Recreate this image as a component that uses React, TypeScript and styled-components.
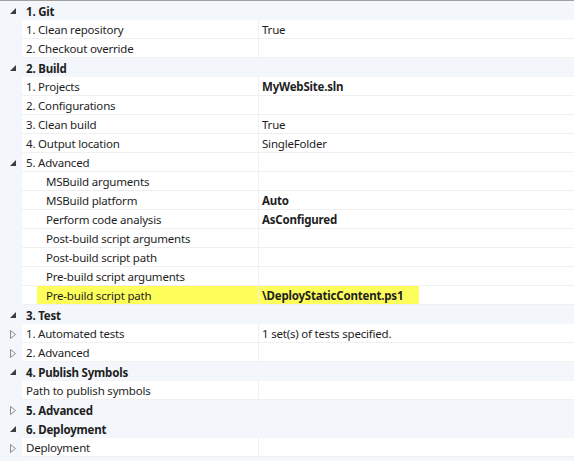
import styled, { createGlobalStyle } from "styled-components"

const GlobalStyle = createGlobalStyle`
  html, body { margin: 0; padding: 0; background: #ffffff; }
  body {
    font-family: "Segoe UI", "Noto Sans", "Open Sans", sans-serif;
    font-size: 11.5px;
    letter-spacing: -0.2px;
    color: #1e1e1e;
  }
`

type Expander = "none" | "open" | "closed"

type Item =
  | { kind: "cat"; label: string; expander?: Expander }
  | { kind: "prop"; label: string; value?: string; bold?: boolean; indent?: number; expander?: Expander; highlight?: boolean }

const items: Item[] = [
  { kind: "cat", label: "1. Git", expander: "open" },
  { kind: "prop", label: "1. Clean repository", value: "True" },
  { kind: "prop", label: "2. Checkout override" },
  { kind: "cat", label: "2. Build", expander: "open" },
  { kind: "prop", label: "1. Projects", value: "MyWebSite.sln", bold: true },
  { kind: "prop", label: "2. Configurations" },
  { kind: "prop", label: "3. Clean build", value: "True" },
  { kind: "prop", label: "4. Output location", value: "SingleFolder" },
  { kind: "prop", label: "5. Advanced", expander: "open" },
  { kind: "prop", label: "MSBuild arguments", indent: 1 },
  { kind: "prop", label: "MSBuild platform", value: "Auto", bold: true, indent: 1 },
  { kind: "prop", label: "Perform code analysis", value: "AsConfigured", bold: true, indent: 1 },
  { kind: "prop", label: "Post-build script arguments", indent: 1 },
  { kind: "prop", label: "Post-build script path", indent: 1 },
  { kind: "prop", label: "Pre-build script arguments", indent: 1 },
  { kind: "prop", label: "Pre-build script path", value: "\\DeployStaticContent.ps1", bold: true, indent: 1, highlight: true },
  { kind: "cat", label: "3. Test", expander: "open" },
  { kind: "prop", label: "1. Automated tests", value: "1 set(s) of tests specified.", expander: "closed" },
  { kind: "prop", label: "2. Advanced", expander: "closed" },
  { kind: "cat", label: "4. Publish Symbols", expander: "open" },
  { kind: "prop", label: "Path to publish symbols" },
  { kind: "cat", label: "5. Advanced", expander: "closed" },
  { kind: "cat", label: "6. Deployment", expander: "open" },
  { kind: "prop", label: "Deployment", expander: "closed" },
]

const Toggle = ({ type }: { type?: Expander }) => {
  if (type === "open")
    return (
      <svg width="6" height="6" viewBox="0 0 6 6">
        <polygon points="6,0 6,6 0,6" fill="#3c3c3c" />
      </svg>
    )
  if (type === "closed")
    return (
      <svg width="6" height="9" viewBox="0 0 6 9">
        <polygon points="0.5,0.5 5.5,4.5 0.5,8.5" fill="none" stroke="#8c8c8c" />
      </svg>
    )
  return null
}

const App = () => {
  return (
    <>
      <GlobalStyle />
      <Grid>
        {items.map((it, i) =>
          it.kind === "cat" ? (
            <CategoryRow key={i}>
              <Margin><Toggle type={it.expander} /></Margin>
              <CategoryLabel>{it.label}</CategoryLabel>
            </CategoryRow>
          ) : (
            <PropRow key={i}>
              <Margin><Toggle type={it.expander} /></Margin>
              <NameCell indent={it.indent ?? 0} highlight={!!it.highlight}>
                <span>{it.label}</span>
              </NameCell>
              <ValueCell>
                <Value bold={!!it.bold} highlight={!!it.highlight}>{it.value}</Value>
              </ValueCell>
            </PropRow>
          )
        )}
      </Grid>
    </>
  )
}

export default App

const Grid = styled.div`
  width: 574px;
  height: 461px;
  box-sizing: border-box;
  border-top: 1px solid #a0a0a0;
  background: #f3f6fa;
  display: flex;
  flex-direction: column;
  overflow: hidden;
`

const CategoryRow = styled.div`
  display: grid;
  grid-template-columns: 22px 1fr;
  height: 19px;
  background: #f3f6fa;
`

const Margin = styled.div`
  display: flex;
  align-items: center;
  justify-content: flex-start;
  padding-left: 10px;
  padding-top: 1px;
  box-sizing: border-box;
`

const CategoryLabel = styled.div`
  display: flex;
  align-items: center;
  padding: 2px 0 0 4px;
  font-weight: bold;
  white-space: nowrap;
`

const PropRow = styled.div`
  display: grid;
  grid-template-columns: 22px 237px 1fr;
  height: 19px;
  background: #f3f6fa;
`

const NameCell = styled.div<{ indent: number; highlight: boolean }>`
  display: flex;
  align-items: center;
  background: #ffffff;
  border-bottom: 1px solid #f0f0f0;
  border-right: 1px solid #f0f0f0;
  padding-left: ${({ indent }) => 4 + indent * 20}px;
  white-space: nowrap;
  overflow: hidden;
  span {
    display: flex;
    align-items: center;
    height: 100%;
    padding: 1px 240px 0 9px;
    box-sizing: border-box;
    margin-left: -9px;
    background: ${({ highlight }) => (highlight ? "#ffff5c" : "transparent")};
  }
`

const ValueCell = styled.div`
  display: flex;
  align-items: center;
  background: #ffffff;
  border-bottom: 1px solid #f0f0f0;
  white-space: nowrap;
`

const Value = styled.div<{ bold: boolean; highlight: boolean }>`
  display: flex;
  align-items: center;
  height: 100%;
  box-sizing: border-box;
  padding: 1px 0 0 3px;
  width: ${({ highlight }) => (highlight ? "160px" : "auto")};
  font-weight: ${({ bold }) => (bold ? "bold" : "normal")};
  background: ${({ highlight }) => (highlight ? "#ffff5c" : "transparent")};
`
